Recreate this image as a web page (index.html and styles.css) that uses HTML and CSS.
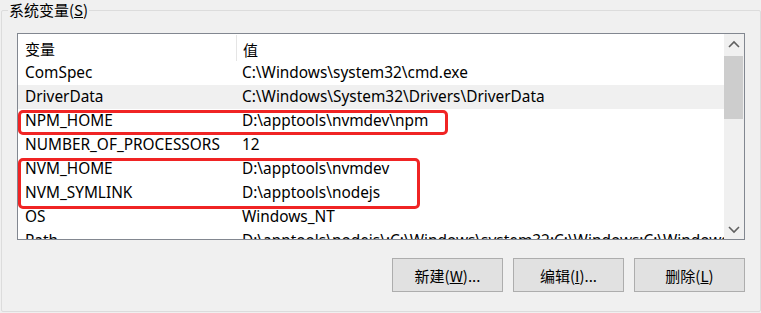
FILE: index.html
```html
<!DOCTYPE html>
<html lang="zh-CN">
<head>
    <meta charset="UTF-8">
    <title>系统变量</title>
    <link rel="stylesheet" href="styles.css">
</head>
<body>
    <fieldset class="group">
        <legend>系统变量(<u>S</u>)</legend>

        <div class="listbox">
            <div class="list">
                <div class="row head">
                    <div class="cell name">变量</div>
                    <div class="cell value">值</div>
                </div>
                <div class="row"><div class="cell name">ComSpec</div><div class="cell value">C:\Windows\system32\cmd.exe</div></div>
                <div class="row sel"><div class="cell name">DriverData</div><div class="cell value">C:\Windows\System32\Drivers\DriverData</div></div>
                <div class="row"><div class="cell name">NPM_HOME</div><div class="cell value">D:\apptools\nvmdev\npm</div></div>
                <div class="row"><div class="cell name">NUMBER_OF_PROCESSORS</div><div class="cell value">12</div></div>
                <div class="row"><div class="cell name">NVM_HOME</div><div class="cell value">D:\apptools\nvmdev</div></div>
                <div class="row"><div class="cell name">NVM_SYMLINK</div><div class="cell value">D:\apptools\nodejs</div></div>
                <div class="row"><div class="cell name">OS</div><div class="cell value">Windows_NT</div></div>
                <div class="row"><div class="cell name">Path</div><div class="cell value">D:\apptools\nodejs\;C:\Windows\system32;C:\Windows;C:\Windows\System32\Wbem</div></div>

                <!-- red highlight marks drawn over the rows -->
                <div class="mark mark-npm"></div>
                <div class="mark mark-nvm"></div>
            </div>
            <div class="scrollbar">
                <svg class="arrow" width="20" height="20" viewBox="0 0 20 20"><path d="M5 13 L10 8 L15 13" fill="none" stroke="#606060" stroke-width="1.6"/></svg>
                <div class="thumb"></div>
                <div class="track"></div>
                <svg class="arrow" width="20" height="20" viewBox="0 0 20 20"><path d="M5 8 L10 13 L15 8" fill="none" stroke="#606060" stroke-width="1.6"/></svg>
            </div>
        </div>

        <div class="buttons">
            <button>新建(<u>W</u>)...</button>
            <button>编辑(<u>I</u>)...</button>
            <button>删除(<u>L</u>)</button>
        </div>
    </fieldset>
</body>
</html>
```

FILE: styles.css
```css
body {
    margin: 0;
    background-color: #f0f0f0;
    font-family: 'Noto Sans', 'Noto Sans CJK SC', sans-serif;
    font-size: 15.4px;
    color: #000;
}

.group {
    margin: 0 0 0 1px;
    padding: 0 15px 0 15px;
    width: 728px;
    min-width: 0;
    height: 310px;
    border: 1px solid #dcdcdc;
    border-radius: 2px;
}

.group legend {
    padding: 0 1px;
    margin-left: -9px;
    font-size: 15px;
    line-height: 20px;
    font-family: 'Noto Sans CJK SC', sans-serif;
}

.listbox {
    margin-top: 13px;
    height: 205px;
    border: 1px solid #828790;
    background-color: #fff;
    display: flex;
    overflow: hidden;
}

.list {
    flex: 1;
    min-width: 0;
    position: relative;
    overflow: hidden;
}

.row {
    display: flex;
    height: 24px;
    line-height: 24px;
    white-space: nowrap;
}

.row.head {
    height: 27px;
    line-height: 29px;
}

.row.sel {
    background-color: #f0f0f0;
}

.cell.name {
    width: 211px;
    flex: none;
    padding-left: 7px;
    overflow: hidden;
}

.cell.value {
    padding-left: 6px;
}

.head .cell {
    font-family: 'Noto Sans CJK SC', sans-serif;
    font-size: 15px;
}

.head .cell.value {
    border-left: 1px solid #e5e5e5;
    margin-top: 1px;
}

.mark {
    position: absolute;
    left: 0;
    border: 3px solid #f02424;
    border-radius: 5px;
}

.mark-npm {
    top: 76px;
    width: 424px;
    height: 19px;
}

.mark-nvm {
    top: 124px;
    width: 396px;
    height: 45px;
}

.scrollbar {
    width: 20px;
    flex: none;
    background-color: #f0f0f0;
    display: flex;
    flex-direction: column;
}

.arrow {
    display: block;
    flex: none;
}

.thumb {
    height: 63px;
    margin: 2px 1px 0 0;
    background-color: #cdcdcd;
}

.track {
    flex: 1;
}

.buttons {
    display: flex;
    justify-content: flex-end;
    gap: 10px;
    margin-top: 18px;
}

.buttons button {
    width: 111px;
    height: 34px;
    background-color: #e1e1e1;
    border: 1px solid #adadad;
    border-radius: 0;
    font-family: 'Noto Sans CJK SC', sans-serif;
    font-size: 15px;
    color: #000;
    padding: 0;
}
```
